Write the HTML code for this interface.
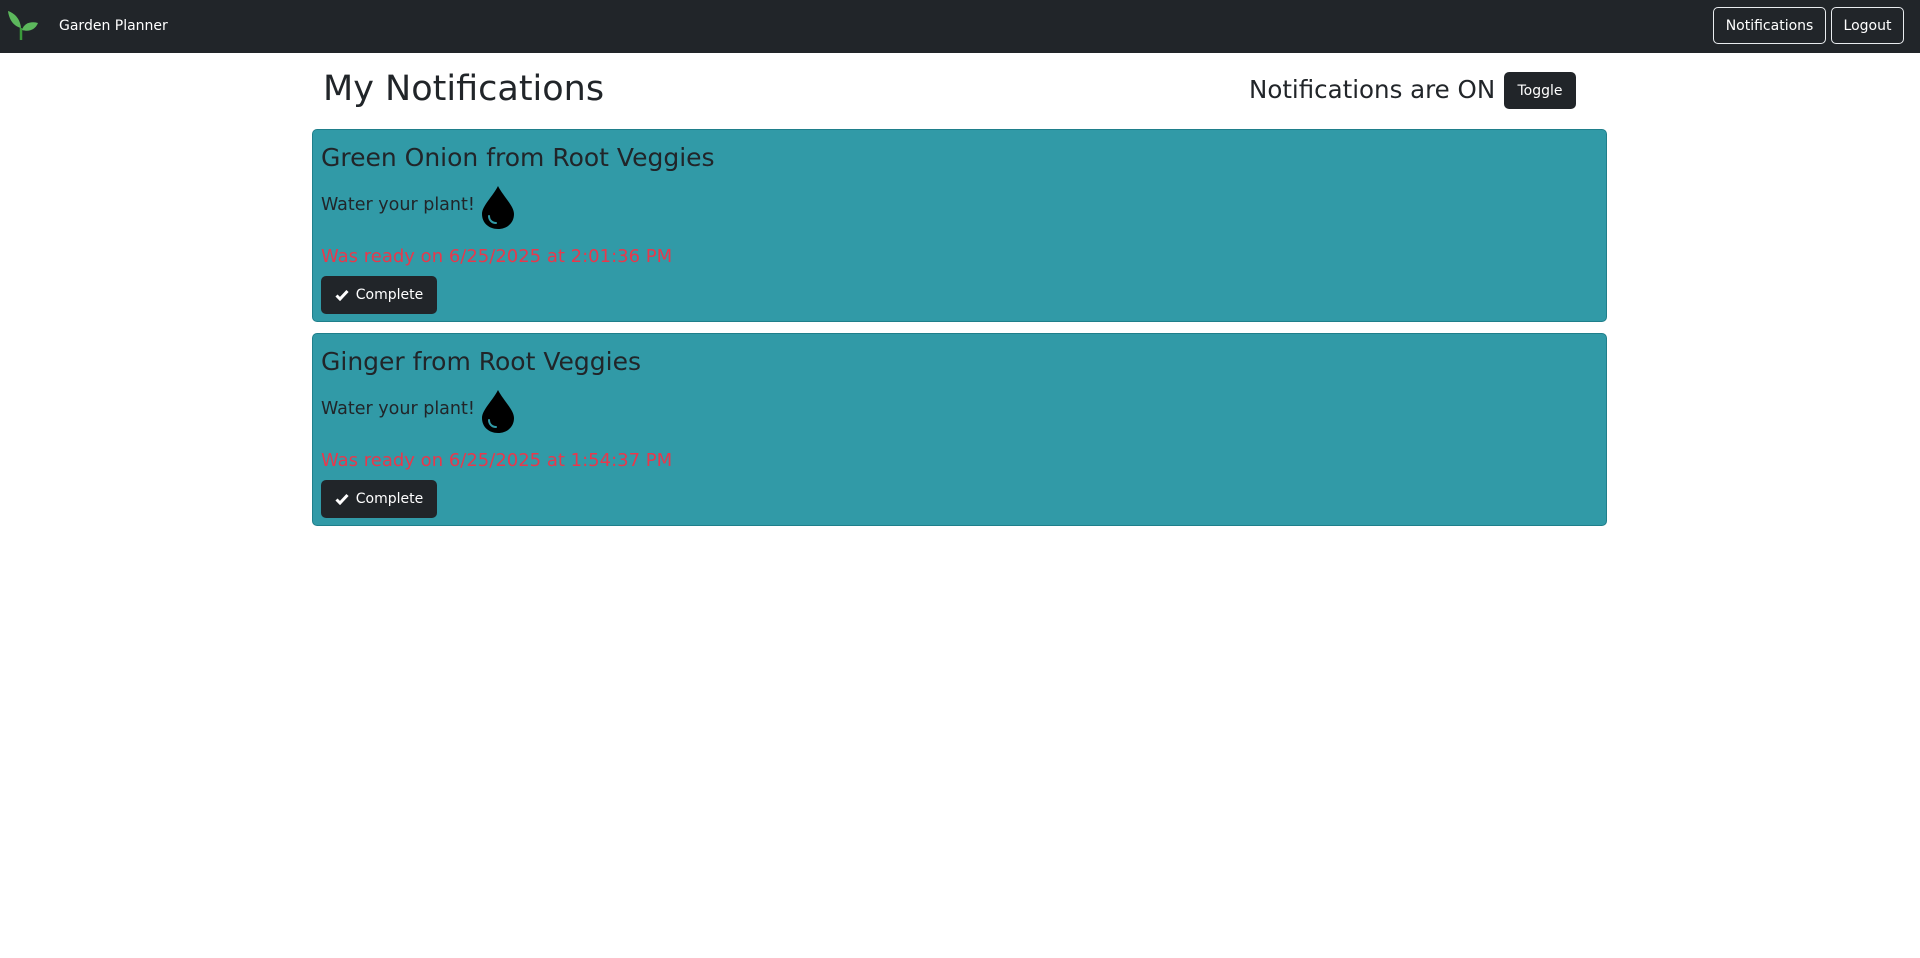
<!DOCTYPE html>
<html><head><meta charset="utf-8"><style>
*{box-sizing:border-box;margin:0;padding:0}
body{width:1920px;height:958px;background:#fff;font-family:"DejaVu Sans","Liberation Sans",sans-serif;color:#212529;position:relative;overflow:hidden}
.nav{position:absolute;left:0;top:0;width:1920px;height:53px;background:#212529}
.brand{position:absolute;left:59px;top:18px;color:#fff;font-size:14px}
.nbtn{position:absolute;top:7px;height:37px;border:1px solid #e9ecef;border-radius:5px;color:#fff;font-size:14px;display:flex;align-items:center;justify-content:center}
h1{position:absolute;left:323px;top:64px;font-weight:normal;font-size:35px;line-height:50px}
.on{position:absolute;left:1249px;top:75px;font-size:24.5px;line-height:30px}
.toggle{position:absolute;left:1504px;top:72px;width:72px;height:37px;background:#212529;color:#fff;border-radius:5px;font-size:14px;display:flex;align-items:center;justify-content:center}
.card{position:absolute;left:312px;width:1295px;height:193px;background:#319aa7;border:1px solid #1f7f8b;border-radius:5px}
.card .t{position:absolute;left:8px;top:12px;font-size:25px;line-height:32px}
.card .w{position:absolute;left:8px;top:63px;font-size:17.5px;line-height:24px}
.card svg.d{position:absolute;left:168px;top:56px}
.card .r{position:absolute;left:8px;top:115px;font-size:18px;line-height:24px;color:#e8384c}
.card .b{position:absolute;left:8px;top:146px;width:116px;height:38px;background:#212529;border-radius:5px;color:#fff;font-size:14px;display:flex;align-items:center;justify-content:center;gap:7px}
</style></head><body>
<div class="nav">
<svg style="position:absolute;left:8px;top:10px" width="30" height="30" viewBox="0 0 30 30"><path d="M13 30 L13 18" stroke="#3a9a3a" stroke-width="2.5"/><path d="M13 18 C12 8 6 3 0 1 C1 9 5 16 13 18Z" fill="#5cb85c"/><path d="M14 20 C16 13 23 11 30 13 C27 20 21 22 14 20Z" fill="#5cb85c"/></svg>
<div class="brand">Garden Planner</div>
<div class="nbtn" style="left:1713px;width:113px">Notifications</div>
<div class="nbtn" style="left:1831px;width:73px">Logout</div>
</div>
<h1>My Notifications</h1>
<div class="on">Notifications are ON</div>
<div class="toggle">Toggle</div>

<div class="card" style="top:129px">
<div class="t">Green Onion from Root Veggies</div>
<div class="w">Water your plant!</div>
<svg class="d" width="34" height="43" viewBox="0 0 34 43"><path d="M17 0 C12 10 1 20 1 28 C1 37 8 43 17 43 C26 43 33 37 33 28 C33 20 22 10 17 0Z" fill="#000"/><path d="M8 30 C8 34 11 37 15 37" stroke="#319aa7" stroke-width="2" fill="none" stroke-linecap="round"/></svg>
<div class="r">Was ready on 6/25/2025 at 2:01:36 PM</div>
<div class="b"><svg width="14" height="12" viewBox="0 0 14 12"><path d="M1.5 6.5 L5 10 L12.5 2" stroke="#fff" stroke-width="3" fill="none"/></svg>Complete</div>
</div>

<div class="card" style="top:333px">
<div class="t">Ginger from Root Veggies</div>
<div class="w">Water your plant!</div>
<svg class="d" width="34" height="43" viewBox="0 0 34 43"><path d="M17 0 C12 10 1 20 1 28 C1 37 8 43 17 43 C26 43 33 37 33 28 C33 20 22 10 17 0Z" fill="#000"/><path d="M8 30 C8 34 11 37 15 37" stroke="#319aa7" stroke-width="2" fill="none" stroke-linecap="round"/></svg>
<div class="r">Was ready on 6/25/2025 at 1:54:37 PM</div>
<div class="b"><svg width="14" height="12" viewBox="0 0 14 12"><path d="M1.5 6.5 L5 10 L12.5 2" stroke="#fff" stroke-width="3" fill="none"/></svg>Complete</div>
</div>
</body></html>
